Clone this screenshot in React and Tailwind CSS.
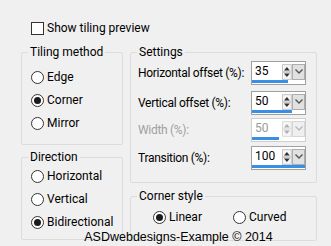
import React from 'react';

const FONT = { fontFamily: 'Roboto, "Liberation Sans", sans-serif' };

const Radio = ({ checked, label, className = '' }) => (
  <div className={`flex h-[15px] items-center gap-[3px] ${className}`}>
    <span className="flex h-[13px] w-[13px] shrink-0 items-center justify-center rounded-full border border-[#333] bg-white">
      {checked && <span className="h-[7px] w-[7px] rounded-full bg-[#1a1a1a]" />}
    </span>
    <span>{label}</span>
  </div>
);

const Group = ({ title, className = '', children }) => (
  <div className={`rounded-[2px] border border-[#dcdcdc] ${className}`}>
    <div className="-mt-[8px] ml-[6px] w-fit bg-[#f0f0f0] px-[2px]">{title}</div>
    {children}
  </div>
);

// bar fill follows the field's range, e.g. offsets go -100..100
const SpinBox = ({ value, min = 0, max = 100, disabled }) => {
  const frac = (value - min) / (max - min);
  return (
    <div className={`relative h-[24px] w-[55px] border bg-white ${disabled ? 'border-[#cfcfcf]' : 'border-[#a0a0a0]'}`}>
      <div className="flex h-[19px] items-center">
        <span className={`ml-[3px] w-[28px] ${disabled ? 'text-[#9a9a9a]' : 'text-black'}`}>{value}</span>
        <svg width="10" height="16" viewBox="0 0 10 16">
          <rect x="0.5" y="0.5" width="9" height="15" fill="#f6f6f6" stroke={disabled ? '#dadada' : '#c4c4c4'} />
          <path d="M2 6.5 L5 3 L8 6.5 Z" fill={disabled ? '#b0b0b0' : '#333'} />
          <path d="M2 9.5 L5 13 L8 9.5 Z" fill={disabled ? '#b0b0b0' : '#333'} />
          <line x1="1" y1="8" x2="9" y2="8" stroke={disabled ? '#d0d0d0' : '#a8a8a8'} />
        </svg>
        <div className={`flex h-[16px] w-[13px] items-center justify-center border ${disabled ? 'border-[#d6d6d6] bg-[#efefef]' : 'border-[#adadad] bg-[#e1e1e1]'}`}>
          <svg width="8" height="5" viewBox="0 0 8 5">
            <path d="M0.5 0.5 L4 4 L7.5 0.5" fill="none" stroke={disabled ? '#b8b8b8' : '#555'} strokeWidth="1.4" />
          </svg>
        </div>
      </div>
      <div className="absolute bottom-[1px] left-0 h-[3px] bg-[#3a8ee6]" style={{ width: `${frac * 53}px` }} />
    </div>
  );
};

const Row = ({ label, className = '', ...spin }) => (
  <div className={`flex items-center justify-between ${className}`}>
    <span className={`whitespace-nowrap tracking-[-0.3px] ${spin.disabled ? 'text-[#a0a0a0]' : 'text-black'}`}>{label}</span>
    <SpinBox {...spin} />
  </div>
);

export default function App() {
  return (
    <div
      className="relative h-[246px] w-[331px] overflow-hidden bg-[#f0f0f0] text-[12px] leading-[15px] text-black"
      style={FONT}
    >
      <div className="ml-[31px] mt-[21px] flex h-[15px] items-center gap-[3px]">
        <span className="h-[13px] w-[13px] border border-[#333] bg-white" />
        <span>Show tiling preview</span>
      </div>

      <div className="mt-[16px] ml-[21px] flex gap-[7px]">
        <div className="flex w-[102px] flex-col gap-[12px]">
          <Group title="Tiling method" className="h-[93px]">
            <div className="flex flex-col gap-[8px] pl-[9px] pt-[10px]">
              <Radio label="Edge" />
              <Radio label="Corner" checked />
              <Radio label="Mirror" />
            </div>
          </Group>
          <Group title="Direction" className="h-[83px]">
            <div className="flex flex-col gap-[8px] pl-[9px] pt-[4px]">
              <Radio label="Horizontal" />
              <Radio label="Vertical" />
              <Radio label="Bidirectional" checked />
            </div>
          </Group>
        </div>

        <div className="flex w-[187px] flex-col gap-[13px]">
          <Group title="Settings" className="h-[131px]">
            <div className="flex flex-col pl-[7px] pr-[10px] pt-[1px]">
              <Row label="Horizontal offset (%):" value={35} min={-100} />
              <Row label="Vertical offset (%):" value={50} min={-100} className="mt-[6px]" />
              <Row label="Width (%):" value={50} disabled className="mt-[3px]" />
              <Row label="Transition (%):" value={100} className="mt-[4px]" />
            </div>
          </Group>
          <Group title="Corner style" className="h-[45px]">
            <div className="flex pl-[22px] pt-[6px]">
              <Radio label="Linear" checked className="w-[80px]" />
              <Radio label="Curved" />
            </div>
          </Group>
        </div>
      </div>

      <div
        className="absolute bottom-[1px] left-0 right-0 pl-[26px] text-center text-[12.5px] leading-[16px] text-black"
        style={{ fontFamily: '"Liberation Sans", Arial, sans-serif' }}
      >
        ASDwebdesigns-Example © 2014
      </div>
    </div>
  );
}
